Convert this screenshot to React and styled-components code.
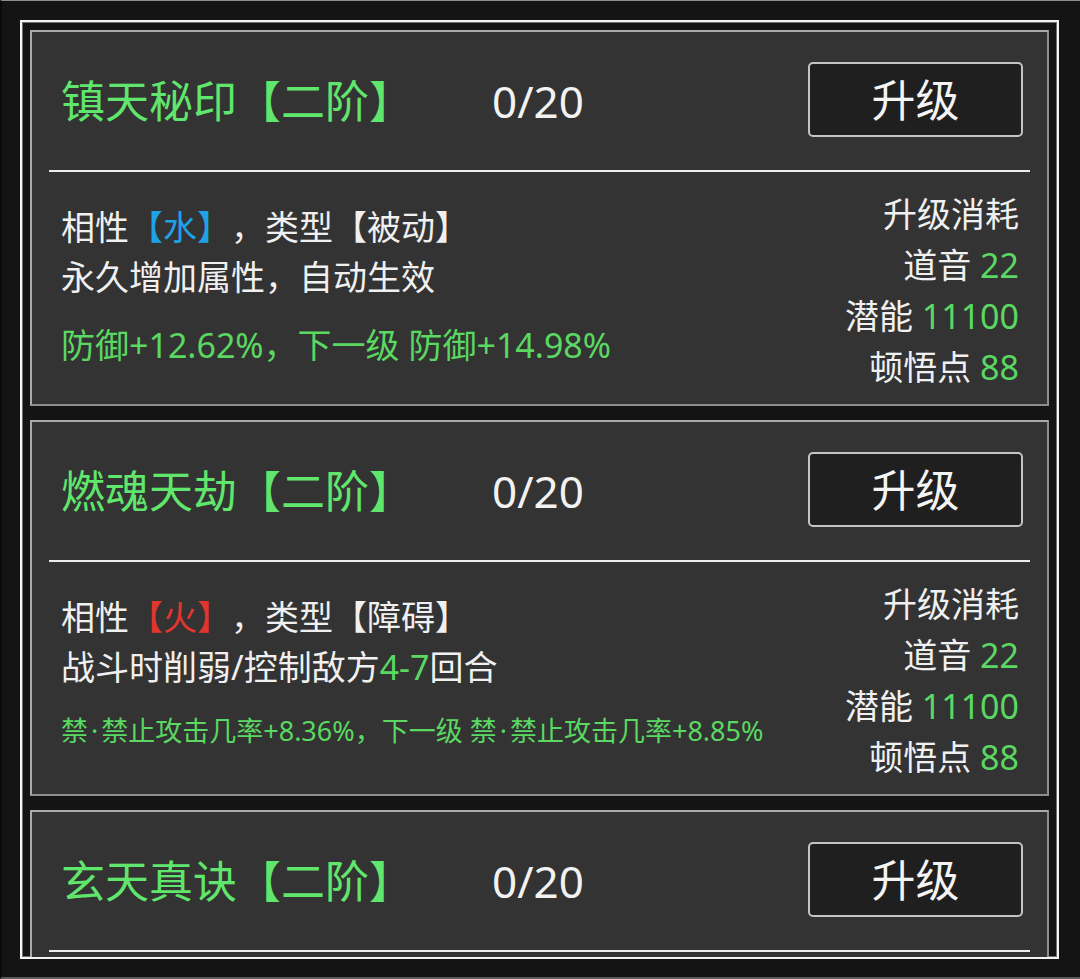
import React from "react";
import styled, { createGlobalStyle } from "styled-components";

const GlobalStyle = createGlobalStyle`
  html, body {
    margin: 0;
    padding: 0;
    background: #141414;
  }
  * { box-sizing: border-box; }
`;

const Page = styled.div`
  width: 1080px;
  height: 979px;
  background: #141414;
  border-top: 1px solid #8c8c8c;
  border-bottom: 2px solid #5c5c5c;
  border-left: 2px solid #0a0a0a;
  padding: 19px 21px 0 18px;
  font-family: "Noto Sans", "Noto Sans CJK SC", sans-serif;
  color: #f2f2f2;
  text-spacing-trim: space-all;
`;

const Frame = styled.div`
  height: 939px;
  border: 2px solid #f4f4f4;
  box-shadow: inset 0 0 0 1px #6e6e6e;
  padding: 8px;
  overflow: hidden;
  display: flex;
  flex-direction: column;
  gap: 14px;
`;

const Card = styled.section`
  flex: 0 0 376px;
  background: #333333;
  border: 2px solid #8e8e8e;
  border-top-color: #ababab;
  border-left-color: #ababab;
  display: flex;
  flex-direction: column;
`;

const Header = styled.div`
  height: 138px;
  display: grid;
  grid-template-columns: 431px 1fr auto;
  align-items: center;
  padding: 0 24px 0 29px;
`;

const Title = styled.div`
  font-size: 44px;
  line-height: 1;
  color: #60e66c;
  white-space: nowrap;
`;

const Count = styled.div`
  font-size: 44px;
  line-height: 1;
  color: #f2f2f2;
`;

const UpgradeButton = styled.button`
  width: 215px;
  height: 75px;
  margin-top: -3px;
  background: #1f1f1f;
  border: 2px solid #c4c4c4;
  border-radius: 5px;
  color: #f4f4f4;
  font-family: "Noto Sans", "Noto Sans CJK SC", sans-serif;
  font-size: 44px;
  line-height: 1;
  display: flex;
  align-items: center;
  justify-content: center;
  padding: 0;
  cursor: pointer;
`;

const Divider = styled.div`
  height: 2px;
  margin: 0 17px;
  background: #ececec;
`;

const Body = styled.div`
  flex: 1;
  display: flex;
  align-items: flex-start;
  justify-content: space-between;
  padding: 0 28px 0 29px;
`;

const Info = styled.div`
  display: flex;
  flex-direction: column;
  padding-top: 30px;
`;

const InfoLine = styled.div`
  font-size: 34px;
  line-height: 50px;
  color: #f0f0f0;
  white-space: nowrap;
`;

const EffectLine = styled.div`
  font-size: ${(p) => p.$size}px;
  line-height: 1.47;
  margin-top: 19px;
  color: #5ad862;
  white-space: nowrap;
`;

const Dot = styled.span`
  margin: 0 3px;
`;

const Tag = styled.span`
  color: ${(p) => p.$color};
`;

const Green = styled.span`
  color: #5ad862;
`;

const Cost = styled.div`
  display: flex;
  flex-direction: column;
  align-items: flex-end;
  padding-top: 17px;
`;

const CostLine = styled.div`
  font-size: 34px;
  line-height: 51px;
  color: #f0f0f0;
  white-space: nowrap;
`;

const skills = [
  {
    name: "镇天秘印【二阶】",
    details: {
      element: "水",
      elementColor: "#1fa2e8",
      type: "被动",
      desc: <>永久增加属性，自动生效</>,
      effect: <>防御+12.62%，下一级 防御+14.98%</>,
      effectSize: 34,
    },
  },
  {
    name: "燃魂天劫【二阶】",
    details: {
      element: "火",
      elementColor: "#e2352d",
      type: "障碍",
      desc: (
        <>
          战斗时削弱/控制敌方<Green>4-7</Green>回合
        </>
      ),
      effect: (
        <>
          禁<Dot>·</Dot>禁止攻击几率+8.36%，下一级 禁<Dot>·</Dot>禁止攻击几率+8.85%
        </>
      ),
      effectSize: 27,
    },
  },
  {
    name: "玄天真诀【二阶】",
    details: null,
  },
];

function SkillCard({ skill }) {
  const d = skill.details;
  return (
    <Card>
      <Header>
        <Title>{skill.name}</Title>
        <Count>0/20</Count>
        <UpgradeButton>升级</UpgradeButton>
      </Header>
      <Divider />
      {d && (
        <Body>
          <Info>
            <InfoLine>
              相性<Tag $color={d.elementColor}>【{d.element}】</Tag>，类型【{d.type}】
            </InfoLine>
            <InfoLine>{d.desc}</InfoLine>
            <EffectLine $size={d.effectSize}>{d.effect}</EffectLine>
          </Info>
          <Cost>
            <CostLine>升级消耗</CostLine>
            <CostLine>
              道音 <Green>22</Green>
            </CostLine>
            <CostLine>
              潜能 <Green>11100</Green>
            </CostLine>
            <CostLine>
              顿悟点 <Green>88</Green>
            </CostLine>
          </Cost>
        </Body>
      )}
    </Card>
  );
}

export default function App() {
  return (
    <>
      <GlobalStyle />
      <Page>
        <Frame>
          {skills.map((s) => (
            <SkillCard key={s.name} skill={s} />
          ))}
        </Frame>
      </Page>
    </>
  );
}
